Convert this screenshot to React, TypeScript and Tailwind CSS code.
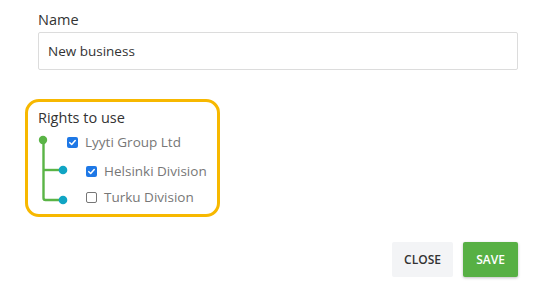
import React from "react";

function Check({ checked }: { checked: boolean }) {
  return checked ? (
    <span className="flex h-[11px] w-[11px] items-center justify-center rounded-[2px] bg-[#1e78e6]">
      <svg width="9" height="9" viewBox="0 0 10 10">
        <path d="M2 5.2 L4.1 7.2 L8 2.8" fill="none" stroke="white" strokeWidth="1.7" strokeLinecap="round" strokeLinejoin="round" />
      </svg>
    </span>
  ) : (
    <span className="h-[11px] w-[11px] rounded-[2px] border border-[#767676] bg-white" />
  );
}

export default function App() {
  return (
    <div className="w-[539px] h-[290px] bg-white" style={{ fontFamily: "'Open Sans', 'Noto Sans', sans-serif" }}>
      <div className="pl-[38px] pr-[21px] pt-[10px]">
        <div className="text-[14.5px] leading-[20px] text-[#333]">Name</div>
        <div className="mt-[2px] flex h-[38px] items-center rounded-[2px] border border-[#dcdcdc] px-[9px] text-[13.5px] text-[#333]">
          New business
        </div>
        <div className="ml-[-13px] mt-[29px] h-[118px] w-[195px] rounded-[14px] border-[3px] border-[#f7b800] pl-[10px] pt-[6px]">
          <div className="text-[14.5px] leading-[20px] text-[#333]">Rights to use</div>
          <div className="mt-[6px] flex">
            <svg width="30" height="72" viewBox="0 0 30 72" className="shrink-0">
              <path d="M5.5 6 V64 Q5.5 66 7.5 66 H25" fill="none" stroke="#5ab446" strokeWidth="2.4" />
              <path d="M5.5 36 H25" fill="none" stroke="#5ab446" strokeWidth="2.4" />
              <circle cx="5" cy="6" r="4.2" fill="#5ab446" />
              <circle cx="25" cy="36" r="4.3" fill="#10a5c4" />
              <circle cx="25" cy="66" r="4.3" fill="#10a5c4" />
            </svg>
            <div className="ml-[-1px] flex flex-col text-[13.5px] text-[#777]">
              <label className="flex h-[16px] items-center gap-[7px]">
                <Check checked={true} />
                <span>Lyyti Group Ltd</span>
              </label>
              <label className="ml-[19px] mt-[13px] flex h-[16px] items-center gap-[7px]">
                <Check checked={true} />
                <span>Helsinki Division</span>
              </label>
              <label className="ml-[19px] mt-[10px] flex h-[16px] items-center gap-[7px]">
                <Check checked={false} />
                <span>Turku Division</span>
              </label>
            </div>
          </div>
        </div>
        <div className="mt-[25px] flex justify-end gap-[10px]">
          <button className="h-[35px] w-[61px] rounded-[2px] bg-[#f3f4f6] text-[12px] font-semibold text-[#333]">
            CLOSE
          </button>
          <button className="h-[35px] w-[55px] rounded-[2px] bg-[#57b044] text-[12px] font-semibold text-white shadow-[0_1px_3px_rgba(0,0,0,0.25)]">
            SAVE
          </button>
        </div>
      </div>
    </div>
  );
}
